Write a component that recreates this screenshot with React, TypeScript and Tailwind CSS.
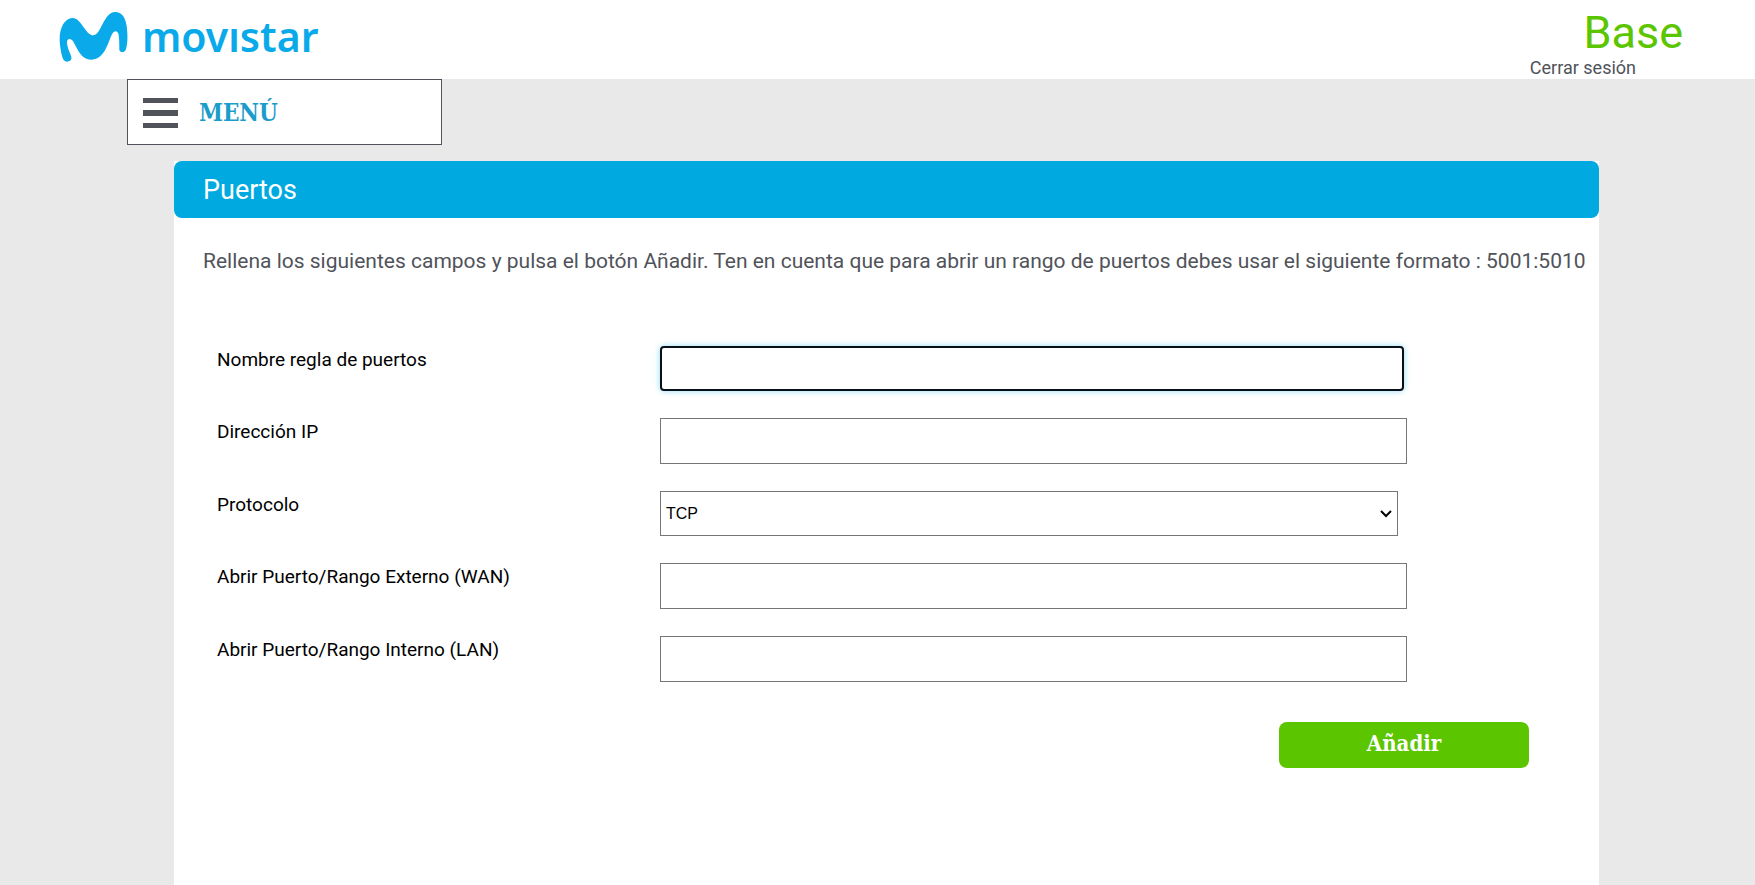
import React, { useState } from "react";

interface FieldProps {
  id: string;
  label: string;
  children: React.ReactNode;
}

function Field({ id, label, children }: FieldProps) {
  return (
    <div className="flex items-start">
      <label htmlFor={id} className="w-[443px] shrink-0 text-[19px] leading-[28px] text-black">
        {label}
      </label>
      <div className="flex-1">{children}</div>
    </div>
  );
}

const inputClass =
  "block h-[46px] w-full border border-[#767676] bg-white px-2 text-base text-black outline-none";

// the first field is shown as the active one
const activeInputClass =
  "block h-[45px] w-[calc(100%-3px)] rounded border-2 border-[#0a101a] bg-white px-2 text-base text-black caret-transparent shadow-[0_0_6px_#8fdcf5] outline-none";

function Logo() {
  return (
    <a href="#" aria-label="movistar" className="flex items-start gap-[14px] text-[#0aaaea]">
      <svg viewBox="58 37 207 150" className="mt-3 h-[50px] w-[69px]" fill="currentColor" aria-hidden="true">
        <path d="M95 172C97 180 90 186 82 186C74 186 70 180 68 172C64 158 60 135 60 118C60 82 76 56 98 55C125 54 137 107 161 107C184 107 192 37 226 37C254 37 262 68 263 100C264 120 263 135 259 148C257 160 240 160 239 150C239 135 239 120 237 106C234 90 223 92 217 104C206 125 196 179 156 180C126 181 114 150 103 130C98 118 83 112 82 128C82 145 92 160 95 172Z" />
      </svg>
      <span className="mt-2 text-[41px] leading-[56px] font-semibold font-['Noto_Sans',sans-serif]">
        movıstar
      </span>
    </a>
  );
}

export default function App() {
  const [form, setForm] = useState({
    name: "",
    ip: "",
    protocol: "TCP",
    wan: "",
    lan: "",
  });

  const handleChange = (e: React.ChangeEvent<HTMLInputElement | HTMLSelectElement>) => {
    setForm({ ...form, [e.target.name]: e.target.value });
  };

  return (
    <div className="flex min-h-screen flex-col bg-[#e9e9e9] font-['Roboto',sans-serif]">
      {/* Top bar */}
      <header className="flex h-[79px] items-start justify-between bg-white pr-[72px] pl-[59px]">
        <Logo />
        <div className="flex flex-col items-end pt-[9px]">
          <span className="text-[45px] leading-[48px] text-[#5bc500]">Base</span>
          <a href="#" className="mr-[47px] text-[18px] leading-[22px] text-[#50535a]">
            Cerrar sesión
          </a>
        </div>
      </header>

      {/* Menu */}
      <button
        type="button"
        className="ml-[127px] flex h-[66px] w-[315px] items-center gap-[21px] border border-[#50535a] bg-white pt-[2px] pl-[15px]"
      >
        <span className="flex w-[35px] flex-col gap-[7px]">
          <span className="h-[5px] bg-[#50535a]" />
          <span className="h-[6px] bg-[#50535a]" />
          <span className="h-[5px] bg-[#50535a]" />
        </span>
        <span className="font-['DejaVu_Serif_Condensed','DejaVu_Serif',serif] text-2xl font-bold text-[#1b9ccb]">
          MENÚ
        </span>
      </button>

      {/* Port form */}
      <main className="mt-4 mr-[156px] ml-[174px] flex-1 bg-white">
        <h1 className="rounded-lg bg-[#00a9e0] px-[29px] pt-[2px] text-[27px] leading-[55px] text-white">
          Puertos
        </h1>
        <p className="mt-7 pr-2 pl-[29px] text-[21px] leading-[30px] text-[#50535a]">
          Rellena los siguientes campos y pulsa el botón Añadir. Ten en cuenta que para abrir un
          rango de puertos debes usar el siguiente formato : 5001:5010
        </p>

        <form
          onSubmit={(e) => e.preventDefault()}
          className="mt-[70px] flex flex-col gap-[27px] pl-[43px]"
        >
          <div className="flex flex-col gap-[27px] pr-[192px]">
            <Field id="name" label="Nombre regla de puertos">
              <input id="name" name="name" type="text" value={form.name} onChange={handleChange} className={activeInputClass} />
            </Field>
            <Field id="ip" label="Dirección IP">
              <input id="ip" name="ip" type="text" value={form.ip} onChange={handleChange} className={inputClass} />
            </Field>
            <Field id="protocol" label="Protocolo">
              <div className="relative w-[calc(100%-9px)]">
                <select
                  id="protocol"
                  name="protocol"
                  value={form.protocol}
                  onChange={handleChange}
                  className="block h-[45px] w-full appearance-none border border-[#767676] bg-white px-[5px] font-['Liberation_Sans',sans-serif] text-base text-black"
                >
                  <option>TCP</option>
                  <option>UDP</option>
                </select>
                <svg
                  viewBox="0 0 12 8"
                  className="pointer-events-none absolute top-[19px] right-[6px] h-2 w-3"
                  fill="none"
                  stroke="black"
                  strokeWidth="2"
                  aria-hidden="true"
                >
                  <path d="M1 1L6 6L11 1" />
                </svg>
              </div>
            </Field>
            <Field id="wan" label="Abrir Puerto/Rango Externo (WAN)">
              <input id="wan" name="wan" type="text" value={form.wan} onChange={handleChange} className={inputClass} />
            </Field>
            <Field id="lan" label="Abrir Puerto/Rango Interno (LAN)">
              <input id="lan" name="lan" type="text" value={form.lan} onChange={handleChange} className={inputClass} />
            </Field>
          </div>
          <button
            type="submit"
            className="mt-[13px] mr-[70px] h-[46px] w-[250px] self-end rounded-lg bg-[#5bc500] pb-1 font-['DejaVu_Serif_Condensed','DejaVu_Serif',serif] text-[22px] font-bold text-white"
          >
            Añadir
          </button>
        </form>
      </main>
    </div>
  );
}
